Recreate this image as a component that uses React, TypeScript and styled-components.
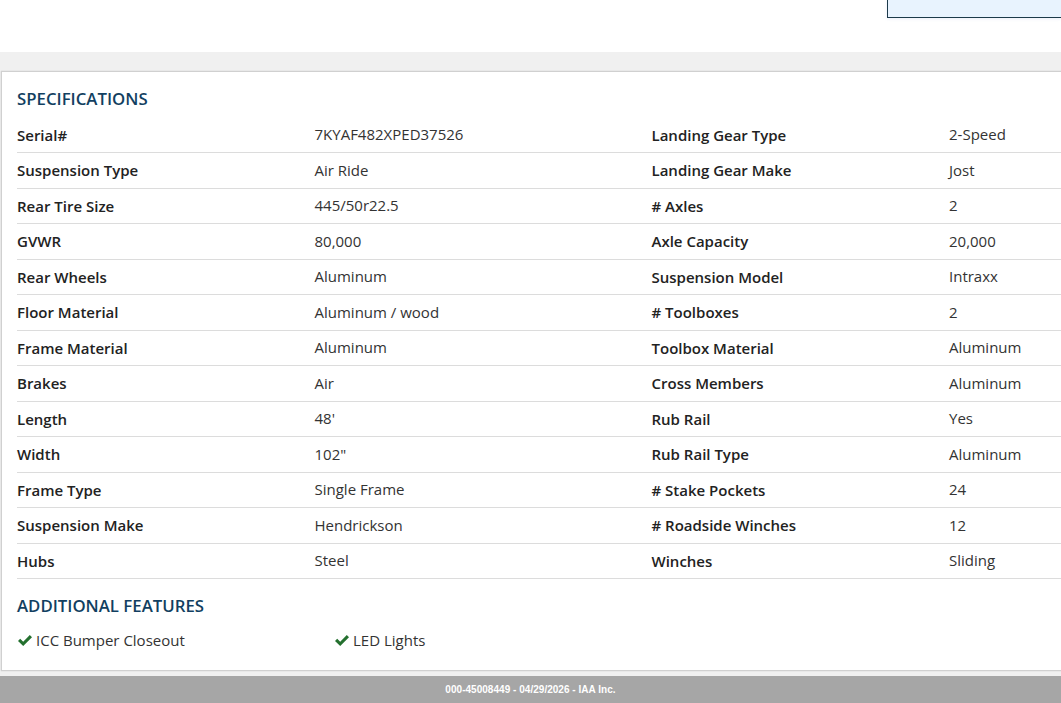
import React from "react";
import styled, { createGlobalStyle } from "styled-components";

const Global = createGlobalStyle`
  html, body { margin: 0; padding: 0; background: #fff; overflow: hidden; }
  body { font-family: "Open Sans", "Liberation Sans", sans-serif; color: #222; }
`;
const Page = styled.div`
  width: 1061px; height: 703px; overflow: hidden; display: flex; flex-direction: column;
`;
const TopBar = styled.div`
  height: 52px; flex: none; display: flex; justify-content: flex-end; align-items: flex-start;
`;
const InfoBox = styled.div`
  width: 173px; height: 17px; background: #e8f3fe; border: 1px solid #1c3a4a; border-top: 0; border-right: 0;
  box-shadow: 0 1px 3px rgba(120,150,220,.15);
`;
const Main = styled.div`
  flex: 1; background: #f0f0f0; padding: 19px 0 5px 1px; display: flex; min-height: 0; overflow: hidden;
`;
const Card = styled.div`
  flex: none; width: 1300px; background: #fff; border: 1px solid #d0d0d0; border-right: 0; box-shadow: 0 0 1px rgba(0,0,0,.2);
  padding: 15px 0 0 15px; box-sizing: border-box;
`;
const Heading = styled.h2<{ $spaced?: boolean }>`
  margin: ${p => (p.$spaced ? "14.5px" : "0")} 0 0; font-size: 16.8px; line-height: 24px; font-weight: 600; color: #123f61; text-transform: uppercase;
`;
const Rows = styled.div`
  width: 1270px; margin-top: 6.5px; display: grid; grid-template-columns: 297.5px 337px 297.5px 1fr;
`;
const Cell = styled.div<{ $label?: boolean }>`
  height: 35.5px; box-sizing: border-box; border-bottom: 1px solid #dcdcdc; display: flex; align-items: center;
  font-size: 15px; font-weight: ${p => (p.$label ? 600 : 400)}; color: ${p => (p.$label ? "#222" : "#333")};
  padding-bottom: ${p => (p.$label ? "0" : "1px")}; white-space: nowrap;
`;
const Features = styled.div`
  display: flex; margin-top: 12px; font-size: 15px; color: #333; line-height: 20px;
`;
const Feature = styled.div`
  width: 317px; display: flex; align-items: center; gap: 4px; padding-left: 1px; box-sizing: border-box;
`;
const Check = styled.svg`
  width: 14px; height: 11px; flex: none; fill: #24702f; margin-top: 2px;
`;
const Footer = styled.footer`
  height: 27px; flex: none; background: #a6a6a6; color: #fff; display: flex; align-items: center; justify-content: center;
  font-family: "Liberation Sans", Arial, sans-serif; font-size: 10px; font-weight: 700; letter-spacing: 0.03px;
`;

const data: [string, string, string, string][] = [
  ["Serial#", "7KYAF482XPED37526", "Landing Gear Type", "2-Speed"],
  ["Suspension Type", "Air Ride", "Landing Gear Make", "Jost"],
  ["Rear Tire Size", "445/50r22.5", "# Axles", "2"],
  ["GVWR", "80,000", "Axle Capacity", "20,000"],
  ["Rear Wheels", "Aluminum", "Suspension Model", "Intraxx"],
  ["Floor Material", "Aluminum / wood", "# Toolboxes", "2"],
  ["Frame Material", "Aluminum", "Toolbox Material", "Aluminum"],
  ["Brakes", "Air", "Cross Members", "Aluminum"],
  ["Length", "48'", "Rub Rail", "Yes"],
  ["Width", "102\"", "Rub Rail Type", "Aluminum"],
  ["Frame Type", "Single Frame", "# Stake Pockets", "24"],
  ["Suspension Make", "Hendrickson", "# Roadside Winches", "12"],
  ["Hubs", "Steel", "Winches", "Sliding"],
];

const CheckIcon = () => (
  <Check viewBox="0 0 14 11"><path d="M5.2 11 0 5.9l2.2-2.2 3 3L11.8 0 14 2.2z" /></Check>
);

export default function App() {
  return (
    <Page>
      <Global />
      <TopBar><InfoBox /></TopBar>
      <Main>
        <Card>
          <Heading>Specifications</Heading>
          <Rows>
            {data.map(r => (
              <React.Fragment key={r[0]}>
                <Cell $label>{r[0]}</Cell>
                <Cell>{r[1]}</Cell>
                <Cell $label>{r[2]}</Cell>
                <Cell>{r[3]}</Cell>
              </React.Fragment>
            ))}
          </Rows>
          <Heading $spaced>Additional Features</Heading>
          <Features>
            <Feature><CheckIcon />ICC Bumper Closeout</Feature>
            <Feature><CheckIcon />LED Lights</Feature>
          </Features>
        </Card>
      </Main>
      <Footer>000-45008449 - 04/29/2026 - IAA Inc.</Footer>
    </Page>
  );
}
